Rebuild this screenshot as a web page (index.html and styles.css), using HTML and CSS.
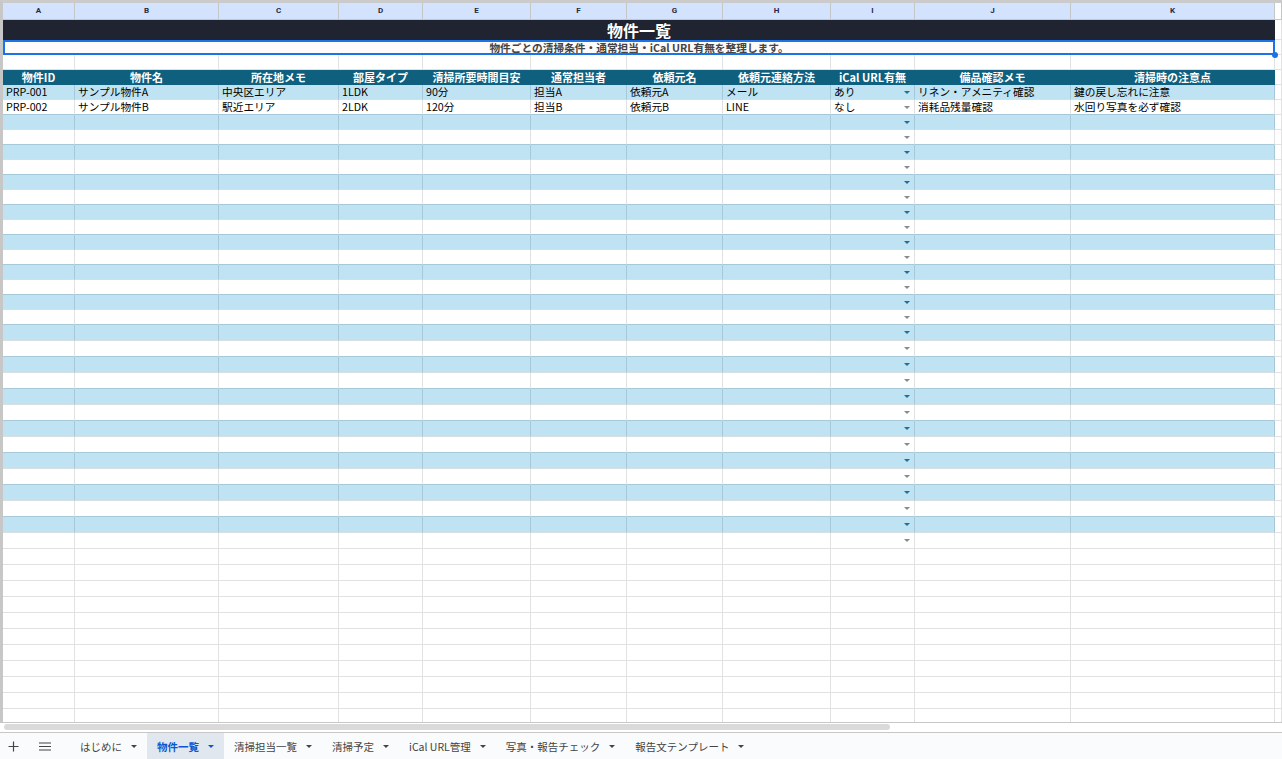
FILE: index.html
```html
<!DOCTYPE html>
<html lang="ja">

<head>
	<meta charset="utf-8">
	<title>物件一覧</title>
	<link rel="stylesheet" href="styles.css">
</head>

<body>
	<div class="sheet" id="sheet">
		<div class="row cols">
			<div>A</div><div>B</div><div>C</div><div>D</div><div>E</div><div>F</div>
			<div>G</div><div>H</div><div>I</div><div>J</div><div>K</div><div></div>
		</div>
		<div class="row title-row">
			<div class="title">物件一覧</div><div></div>
		</div>
		<div class="row">
			<div class="sub">物件ごとの清掃条件・通常担当・iCal URL有無を整理します。<span class="handle"></span></div><div></div>
		</div>
		<div class="row">
			<div></div><div></div><div></div><div></div><div></div><div></div>
			<div></div><div></div><div></div><div></div><div></div><div></div>
		</div>
		<div class="row head">
			<div>物件ID</div><div>物件名</div><div>所在地メモ</div><div>部屋タイプ</div>
			<div>清掃所要時間目安</div><div>通常担当者</div><div>依頼元名</div><div>依頼元連絡方法</div>
			<div>iCal URL有無</div><div>備品確認メモ</div><div>清掃時の注意点</div><div></div>
		</div>
		<div class="row band">
			<div>PRP-001</div><div>サンプル物件A</div><div>中央区エリア</div><div>1LDK</div>
			<div>90分</div><div>担当A</div><div>依頼元A</div><div>メール</div>
			<div class="dd">あり</div><div>リネン・アメニティ確認</div><div>鍵の戻し忘れに注意</div><div></div>
		</div>
		<div class="row w">
			<div>PRP-002</div><div>サンプル物件B</div><div>駅近エリア</div><div>2LDK</div>
			<div>120分</div><div>担当B</div><div>依頼元B</div><div>LINE</div>
			<div class="dd">なし</div><div>消耗品残量確認</div><div>水回り写真を必ず確認</div><div></div>
		</div>
	</div>

	<div class="hscroll"><div class="thumb"></div></div>

	<div class="tabs">
		<div class="tool">
			<svg width="11" height="11" viewBox="0 0 11 11"><path d="M5.5 0.5v10M0.5 5.5h10" stroke="#444" stroke-width="1.2" fill="none"/></svg>
		</div>
		<div class="tool menu">
			<svg width="12" height="9" viewBox="0 0 12 9"><path d="M0 1h12M0 4.5h12M0 8h12" stroke="#444" stroke-width="1.2" fill="none"/></svg>
		</div>
		<div class="tab">はじめに</div>
		<div class="tab active">物件一覧</div>
		<div class="tab">清掃担当一覧</div>
		<div class="tab">清掃予定</div>
		<div class="tab">iCal URL管理</div>
		<div class="tab">写真・報告チェック</div>
		<div class="tab">報告文テンプレート</div>
	</div>

	<script>
		/* lignes vides : 14 rangées de 15px, 14 de 16px avec liste déroulante, puis le reste sans */
		var sheet = document.getElementById('sheet');
		for (var r = 0; r < 39; r++) {
			var row = document.createElement('div');
			var band = r < 28;
			row.className = 'row' + (r >= 14 ? ' tall' : '') + (band ? (r % 2 == 0 ? ' band' : ' w') : '');
			if (r == 27) { row.className += ' last' }
			for (var c = 0; c < 12; c++) {
				var cell = document.createElement('div');
				if (band && c == 8) { cell.className = 'dd' }
				row.appendChild(cell);
			}
			sheet.appendChild(row);
		}
	</script>
</body>

</html>
```

FILE: styles.css
```css
* {
	box-sizing: border-box;
}

body {
	margin: 0;
	width: 1282px;
	height: 759px;
	overflow: hidden;
	background-color: white;
	font-family: "Noto Sans CJK JP", "Liberation Sans", sans-serif;
	font-size: 10.7px;
	color: #000;
}

.sheet {
	height: 722px;
	overflow: hidden;
	border-top: 3px solid #cbcbcb;
	border-left: 3px solid #c7c7c7;
}

.row {
	display: grid;
	grid-template-columns: 72px 144px 120px 84px 108px 96px 96px 108px 84px 156px 204px 1fr;
	height: 15px;
}

.row>div {
	border-right: 1px solid #e1e1e1;
	border-bottom: 1px solid #e1e1e1;
	padding: 0 3px;
	line-height: 14px;
	white-space: nowrap;
	overflow: hidden;
}

.tall {
	height: 16px;
}

.tall>div {
	line-height: 15px;
}

.cols {
	height: 17px;
}

.cols>div {
	background-color: #d3e3fd;
	border-color: #c4c7c5;
	text-align: center;
	font-family: Roboto, "Liberation Sans", sans-serif;
	font-weight: bold;
	font-size: 8px;
	line-height: 16px;
	color: #1f2a44;
}

.cols>div:last-child {
	background-color: white;
}

.title-row {
	height: 20px;
}

.row>.title {
	grid-column: 1 / 12;
	overflow: visible;
	border: none;
	background-color: #1f2430;
	color: white;
	font-weight: bold;
	font-size: 16px;
	line-height: 20px;
	text-align: center;
}

.row>.sub {
	grid-column: 1 / 12;
	position: relative;
	overflow: visible;
	border: none;
	background-color: #fdfcfa;
	box-shadow: inset 0 0 0 2px #1a73e8;
	color: #444;
	font-weight: bold;
	line-height: 15px;
	text-align: center;
}

.handle {
	position: absolute;
	right: -3px;
	bottom: -3px;
	width: 6px;
	height: 6px;
	border-radius: 50%;
	background-color: #1a73e8;
}

.head>div {
	background-color: #0f5f7e;
	border-color: #0f5f7e;
	color: white;
	font-weight: bold;
	font-size: 11px;
	text-align: center;
}

.head>div:last-child {
	background-color: white;
	border-color: #e1e1e1;
}

.band>div {
	background-color: #bfe3f3;
	border-right-color: #a6c8db;
	border-bottom-color: #d8dfe3;
}

.w>div {
	border-bottom-color: #a6c8db;
}

.last>div {
	border-bottom-color: #e1e1e1;
}

.band>div:last-child,
.w>div:last-child {
	background-color: white;
	border-color: #e1e1e1;
}

.dd {
	display: flex;
	align-items: center;
}

.dd::after {
	content: "";
	margin-left: auto;
	margin-right: 1px;
	border-left: 3px solid transparent;
	border-right: 3px solid transparent;
	border-top: 3px solid #8a8a8a;
}

.band .dd::after {
	border-top-color: #1d6f95;
}

.hscroll {
	height: 10px;
	border-top: 1px solid #c7c7c7;
	padding: 1px 0 0 4px;
}

.thumb {
	width: 886px;
	height: 6px;
	border-radius: 3px;
	background-color: #dadada;
}

.tabs {
	height: 27px;
	display: flex;
	border-top: 1px solid #c7c7c7;
	background-color: #f9fbfd;
	font-size: 10.5px;
	color: #444;
}

.tool {
	width: 26px;
	display: flex;
	align-items: center;
	justify-content: center;
}

.tool.menu {
	width: 38px;
	margin-right: 6px;
}

.tab {
	display: flex;
	align-items: center;
	gap: 9px;
	padding: 0 10px;
}

.tab::after {
	content: "";
	border-left: 3px solid transparent;
	border-right: 3px solid transparent;
	border-top: 3px solid #444;
}

.tab.active {
	background-color: #e1e7ef;
	color: #0b57d0;
	font-weight: bold;
}

.tab.active::after {
	border-top-color: #0b57d0;
}
```
